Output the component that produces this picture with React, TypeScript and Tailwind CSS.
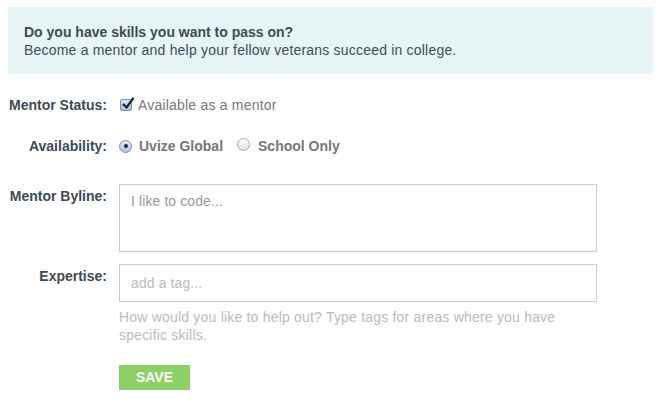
import React from "react";

const font = { fontFamily: '"Liberation Sans", Arial, sans-serif' };

function Label({ children, className = "" }: { children: React.ReactNode; className?: string }) {
  return (
    <div className={`w-[107px] shrink-0 text-right text-[14px] font-bold text-[#404b55] ${className}`}>
      {children}
    </div>
  );
}

function CheckBox() {
  return (
    <span className="relative inline-block h-[12px] w-[12px] rounded-[2px] border border-[#7f8ea6] bg-gradient-to-b from-[#dbe9fb] to-[#a9c6ee]">
      <svg viewBox="0 0 14 14" className="absolute -top-[3px] left-[0px] h-[14px] w-[14px]">
        <path d="M2.5 7.5 L5.5 10.5 L12 1.5" fill="none" stroke="#1d2633" strokeWidth="2.2" strokeLinecap="round" strokeLinejoin="round" />
      </svg>
    </span>
  );
}

function Radio({ checked }: { checked?: boolean }) {
  return (
    <span
      className={`relative inline-flex h-[13px] w-[13px] items-center justify-center rounded-full border ${
        checked
          ? "border-[#7f8ea6] bg-gradient-to-b from-[#e4eefb] to-[#a7c3ea]"
          : "border-[#a9a9a9] bg-gradient-to-b from-[#ffffff] to-[#e1e1e1]"
      }`}
    >
      {checked && <span className="h-[4px] w-[4px] rounded-full bg-[#1d2633]" />}
    </span>
  );
}

export default function App() {
  return (
    <div className="min-h-[404px] w-[671px] bg-white pt-[7px]" style={font}>
      <div className="ml-[8px] w-[645px] bg-[#e8f5f7] px-[16px] pb-[15px] pt-[16px] text-[14px] leading-[18px] text-[#404b55]">
        <div className="font-bold">Do you have skills you want to pass on?</div>
        <div className="tracking-[0.2px]">Become a mentor and help your fellow veterans succeed in college.</div>
      </div>

      <div className="mt-[22px] flex items-center leading-[18px]">
        <Label>Mentor Status:</Label>
        <div className="ml-[13px] flex items-center">
          <CheckBox />
          <span className="ml-[6px] text-[14px] tracking-[0.2px] text-[#777]">Available as a mentor</span>
        </div>
      </div>

      <div className="mt-[23px] flex items-center leading-[18px]">
        <Label>Availability:</Label>
        <div className="ml-[12px] flex items-center">
          <Radio checked />
          <span className="ml-[7px] text-[14px] font-bold text-[#777]">Uvize Global</span>
          <span className="ml-[14px]">
            <Radio />
          </span>
          <span className="ml-[8px] text-[14px] font-bold text-[#777]">School Only</span>
        </div>
      </div>

      <div className="mt-[29px] flex items-start">
        <Label className="pt-[3px] leading-[18px]">Mentor Byline:</Label>
        <textarea
          placeholder="I like to code..."
          className="ml-[12px] h-[68px] w-[478px] resize-none border border-[#cccccc] px-[11px] py-[7px] text-[14px] leading-[18px] tracking-[0.1px] text-[#555] placeholder:text-[#999] outline-none"
          style={font}
        />
      </div>

      <div className="mt-[12px] flex items-start">
        <Label className="pt-[3px] leading-[18px]">Expertise:</Label>
        <div className="ml-[12px] w-[478px]">
          <input
            placeholder="add a tag..."
            className="h-[38px] w-full border border-[#cccccc] px-[11px] text-[14px] tracking-[0.1px] text-[#555] placeholder:text-[#bbbbbb] outline-none"
            style={font}
          />
          <p className="mt-[6px] pr-[40px] text-[14px] leading-[18px] tracking-[0.2px] text-[#bbbbbb]">
            How would you like to help out? Type tags for areas where you have specific skills.
          </p>
          <button className="mt-[21px] h-[25px] w-[71px] bg-[#8cd067] text-[14px] font-bold text-white">
            SAVE
          </button>
        </div>
      </div>
    </div>
  );
}
